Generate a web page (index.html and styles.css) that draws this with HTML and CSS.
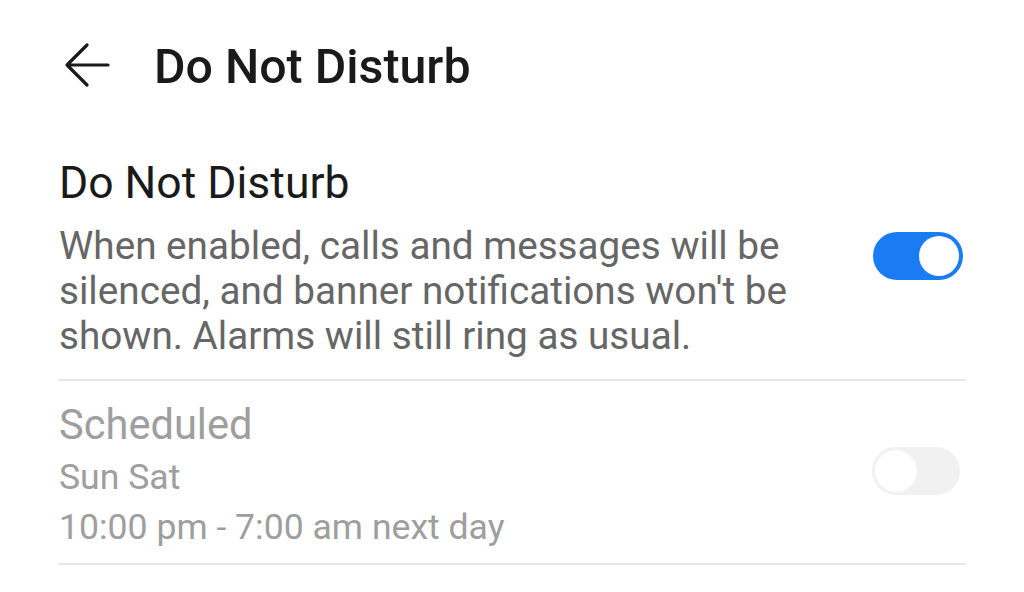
FILE: index.html
```html
<!DOCTYPE html>
<html>
<head>
<meta charset="utf-8">
<link rel="stylesheet" href="styles.css">
</head>
<body>
<div class="page">
  <header class="topbar">
    <svg class="back" width="46" height="46" viewBox="0 0 46 46">
      <path d="M44 23 H3 M23 3 L3 23 L23 43" fill="none" stroke="#1a1a1a" stroke-width="3.2" stroke-linecap="round" stroke-linejoin="round"/>
    </svg>
    <h1 class="title">Do Not Disturb</h1>
  </header>
  <section class="row first">
    <div class="text">
      <div class="label">Do Not Disturb</div>
      <div class="desc">When enabled, calls and messages will be silenced, and banner notifications won't be shown. Alarms will still ring as usual.</div>
    </div>
    <div class="switch on"><span class="knob"></span></div>
  </section>
  <section class="row second">
    <div class="text">
      <div class="label dim">Scheduled</div>
      <div class="sub">Sun Sat</div>
      <div class="sub">10:00 pm - 7:00 am next day</div>
    </div>
    <div class="switch off"><span class="knob"></span></div>
  </section>
</div>
</body>
</html>
```

FILE: styles.css
```css
html, body {
  margin: 0;
  padding: 0;
  background: #ffffff;
}
body {
  font-family: Roboto, "Noto Sans", sans-serif;
  width: 1024px;
  height: 592px;
  overflow: hidden;
}
.page {
  padding: 0 58px 0 59px;
}
.topbar {
  display: flex;
  align-items: center;
  height: 132px;
  margin-left: 5px;
}
.back {
  display: block;
  margin-right: 44px;
  margin-top: -2px;
}
.title {
  margin: 0;
  font-size: 48.3px;
  font-weight: 500;
  color: #1a1a1a;
}
.row {
  display: flex;
  align-items: center;
  justify-content: space-between;
  border-bottom: 2px solid #e6e6e6;
}
.first {
  padding: 25px 0 21px;
}
.second {
  padding: 18px 0 11px;
}
.text {
  flex: 1;
}
.label {
  font-size: 44.5px;
  line-height: 52px;
  color: #1a1a1a;
}
.label.dim {
  font-size: 41.6px;
  color: #9e9e9e;
}
.desc {
  margin-top: 13.5px;
  font-size: 38.7px;
  line-height: 45px;
  color: #666666;
  width: 760px;
}
.sub {
  margin-top: 1px;
  font-size: 35.6px;
  line-height: 50px;
  color: #9e9e9e;
}
.sub + .sub {
  margin-top: 0;
}
.switch {
  position: relative;
  width: 90px;
  height: 48px;
  border-radius: 24px;
  box-sizing: border-box;
  flex-shrink: 0;
}
.switch.on {
  background: #1a7cf2;
  margin-right: 3px;
  margin-top: -2px;
}
.switch.off {
  background: #f1f1f1;
  width: 88px;
  margin-right: 6px;
  margin-top: -8px;
}
.knob {
  position: absolute;
  top: 4px;
  width: 40px;
  height: 40px;
  border-radius: 50%;
  background: #ffffff;
}
.on .knob {
  right: 4px;
}
.off .knob {
  left: 3px;
  top: 3px;
  width: 42px;
  height: 42px;
}
```
